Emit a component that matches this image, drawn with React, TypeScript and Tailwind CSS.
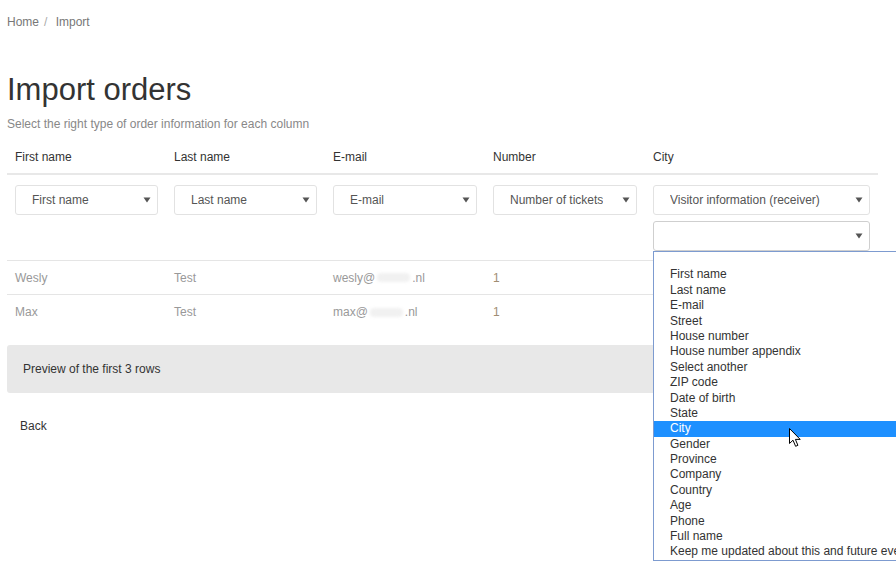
import React from "react";

const font = { fontFamily: '"Liberation Sans", Arial, sans-serif' };

const options = [
  "",
  "First name",
  "Last name",
  "E-mail",
  "Street",
  "House number",
  "House number appendix",
  "Select another",
  "ZIP code",
  "Date of birth",
  "State",
  "City",
  "Gender",
  "Province",
  "Company",
  "Country",
  "Age",
  "Phone",
  "Full name",
  "Keep me updated about this and future events",
];

function Arrow() {
  return (
    <svg width="8" height="6" viewBox="0 0 8 6" className="shrink-0">
      <path d="M0.5 0.5 L7.5 0.5 L4 5.5 Z" fill="#555" />
    </svg>
  );
}

function FakeSelect({ label, active }: { label: string; active?: boolean }) {
  return (
    <div
      className={`flex h-[30px] items-center justify-between rounded-[3px] border bg-white pl-[16px] pr-[6px] text-[12px] text-[#555] ${
        active ? "border-[#cfcfcf]" : "border-[#e2e2e2]"
      }`}
    >
      <span className="truncate">{label}</span>
      <Arrow />
    </div>
  );
}

function Cursor() {
  return (
    <svg width="13" height="20" viewBox="0 0 13 20" className="absolute left-[135px] top-[176px]">
      <path
        d="M0.5 0.5 L0.5 15.5 L4 12.2 L6.6 18.3 L8.9 17.3 L6.4 11.4 L11.2 11.4 Z"
        fill="#fff"
        stroke="#000"
        strokeWidth="1"
        strokeLinejoin="miter"
      />
    </svg>
  );
}

export default function App() {
  const cols = "grid grid-cols-[159px_159px_160px_160px_1fr]";
  const rows = [
    { first: "Wesly", last: "Test", user: "wesly@", num: "1" },
    { first: "Max", last: "Test", user: "max@", num: "1" },
  ];

  return (
    <div className="relative h-[579px] w-[896px] overflow-hidden bg-white px-[7px]" style={font}>
      {/* breadcrumb */}
      <div className="pt-[15px] text-[12px] leading-[14px] text-[#777]">
        Home<span className="px-[5px] text-[#aaa]">/</span> Import
      </div>

      <h1 className="mt-[44px] text-[31px] leading-[33px] text-[#333]">Import orders</h1>
      <p className="mt-[11px] text-[12px] leading-[14px] text-[#888]">
        Select the right type of order information for each column
      </p>

      {/* table */}
      <div className="w-[871px] text-[12px]">
        <div className={`${cols} border-b-2 border-[#e8e8e8] text-[#333]`}>
          {["First name", "Last name", "E-mail", "Number", "City"].map((h) => (
            <div key={h} className="px-2 pb-[9px] pt-[19px] leading-[14px]">
              {h}
            </div>
          ))}
        </div>

        <div className={`${cols} border-b border-[#e5e5e5] pb-[9px] pt-[10px]`}>
          <div className="px-2">
            <FakeSelect label="First name" />
          </div>
          <div className="px-2">
            <FakeSelect label="Last name" />
          </div>
          <div className="px-2">
            <FakeSelect label="E-mail" />
          </div>
          <div className="px-2">
            <FakeSelect label="Number of tickets" />
          </div>
          <div className="relative flex flex-col gap-[6px] px-2">
            <FakeSelect label="Visitor information (receiver)" />
            <FakeSelect label="" active />

            {/* open dropdown */}
            <div className="absolute left-2 top-[66px] z-10 w-[300px] border border-[#7d9bd0] bg-white">
              {options.map((o, i) => (
                <div
                  key={i}
                  className={`h-[15.4px] whitespace-nowrap pl-[16px] text-[12px] leading-[15.4px] ${
                    o === "City" ? "bg-[#1e90ff] text-white" : "text-[#333]"
                  }`}
                >
                  {o}
                </div>
              ))}
              <Cursor />
            </div>
          </div>
        </div>

        {rows.map((r, i) => (
          <div
            key={r.first}
            className={`${cols} h-[34px] items-center text-[#999] ${i === 0 ? "border-b border-[#e5e5e5]" : ""}`}
          >
            <div className="px-2">{r.first}</div>
            <div className="px-2">{r.last}</div>
            <div className="flex items-center px-2">
              <span>{r.user}</span>
              <span className="mx-[2px] inline-block h-[9px] w-[33px] rounded-sm bg-[#f1f1f1] blur-[1.5px]" />
              <span>.nl</span>
            </div>
            <div className="px-2 text-[#a08d72]">{r.num}</div>
            <div />
          </div>
        ))}

        <div className="mt-[16px] flex h-[48px] items-center rounded-[3px] bg-[#e8e8e8] pl-[16px] text-[#333]">
          Preview of the first 3 rows
        </div>

        <div className="mt-[26px] pl-[13px] leading-[14px] text-[#333]">Back</div>
      </div>
    </div>
  );
}
